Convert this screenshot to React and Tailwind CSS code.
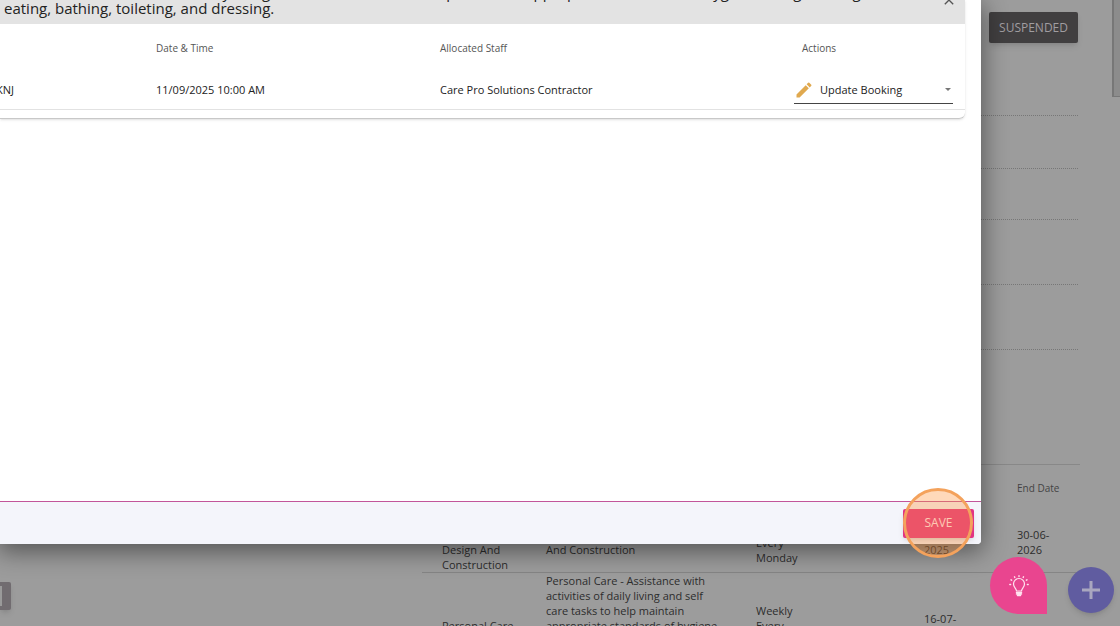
import { useState } from 'react';
import { MdClose, MdEdit } from 'react-icons/md';

const services = [
  {
    name: 'Home Modification Design And Construction',
    description: 'Home Modifications - Design And\u00a0Construction',
    frequency: 'Weekly Every Monday',
    start: '16-07-2025',
    end: '30-06-2026',
  },
  {
    name: 'Personal Care',
    description:
      'Personal Care - Assistance with activities of daily living and self care tasks to help maintain appropriate standards of hygiene and grooming including eating, bathing, toileting, and dressing at home and in the community.',
    frequency: 'Weekly Every Monday',
    start: '16-07-2025',
    end: '',
  },
];

function DottedRow({ className }) {
  return <div className={`border-b border-dotted border-[#777] ${className}`}></div>;
}

function BackgroundPage() {
  return (
    <div className="flex h-full flex-col overflow-hidden text-[#2c2c2c]">
      <div className="flex-1 pr-[42px]">
        <div className="flex h-[52px] items-start justify-end pt-3">
          <button
            type="button"
            className="h-[31px] rounded-xs bg-[#413f40] px-2.5 text-xs text-[#a09da0] shadow-md"
          >
            SUSPENDED
          </button>
        </div>
        <DottedRow className="h-16" />
        <DottedRow className="h-[53px]" />
        <DottedRow className="h-[51px]" />
        <DottedRow className="h-[65px]" />
        <DottedRow className="h-[65px]" />
      </div>

      <div className="flex h-[162px] shrink-0 justify-between pr-10">
        <div className="pt-[118px]">
          <button
            type="button"
            aria-label="Collapse panel"
            className="flex h-7 w-[11px] items-center rounded-r-xs bg-[#716c70] shadow-md"
          >
            <span className="h-5 w-0.5 bg-[#9a9a9a]"></span>
          </button>
        </div>
        <div className="w-[658px] overflow-hidden border-t border-[#888]">
          <table className="w-full table-fixed text-left text-[11px] leading-[15px]">
            <thead>
              <tr className="h-[47px] text-[10px] text-[#444]">
                <th className="w-[113px] pl-5 font-medium">Service</th>
                <th className="w-[210px] pl-[11px] font-medium">Description</th>
                <th className="w-[168px] pl-[11px] font-medium">Frequency</th>
                <th className="w-[92px] pl-[11px] font-medium">Start Date</th>
                <th className="pl-3 font-medium">End Date</th>
              </tr>
            </thead>
            <tbody>
              {services.map((service) => (
                <tr key={service.name} className="border-b border-[#858585]">
                  <td className="pl-5 pr-1">{service.name}</td>
                  <td className="pl-[11px] pr-6">{service.description}</td>
                  <td className="pl-[11px] pr-24">{service.frequency}</td>
                  <td className="pl-[11px] pr-8">{service.start}</td>
                  <td className="pl-3 pr-5">{service.end}</td>
                </tr>
              ))}
            </tbody>
          </table>
        </div>
      </div>
    </div>
  );
}

function BookingDialog() {
  const [action, setAction] = useState('update');

  return (
    <div
      role="dialog"
      aria-label="Update booking"
      className="absolute top-0 bottom-[82px] left-0 right-[139px] flex flex-col overflow-hidden rounded-br bg-white shadow-[0_6px_24px_2px_rgba(0,0,0,0.45)]"
    >
      <div className="flex-1">
        <div className="mr-4 overflow-hidden rounded-br-md border-b border-[#c8c8c8] pb-2 shadow-sm">
          <div className="flex h-6 items-end justify-between bg-[#e3e3e3] pr-2 pb-2 pl-1 text-[15px] leading-4 text-[#222]">
            <h2 className="whitespace-nowrap">
              <span className="block">
                Assistance with activities of daily living and self care tasks to help maintain appropriate standards of hygiene and grooming
              </span>
              eating, bathing, toileting, and dressing.
            </h2>
            <button type="button" aria-label="Close" className="mb-2 text-[#555]">
              <MdClose className="size-4" />
            </button>
          </div>
          <table className="w-full table-fixed border-b border-[#e2e2e2] text-left text-[11px]">
            <thead>
              <tr className="h-12 text-[10px] text-[#555]">
                <th className="w-[156px] font-medium"></th>
                <th className="font-medium">Date &amp; Time</th>
                <th className="w-[354px] font-medium">Allocated Staff</th>
                <th className="w-[171px] pl-2 font-medium">Actions</th>
              </tr>
            </thead>
            <tbody>
              <tr className="h-[37px] text-[#222]">
                <td>
                  <span className="flex w-3.5 justify-end overflow-hidden">KNJ</span>
                </td>
                <td>11/09/2025 10:00 AM</td>
                <td>Care Pro Solutions Contractor</td>
                <td className="pr-3">
                  <label className="flex h-7 items-center border-b border-[#444]">
                    <MdEdit className="size-5 text-[#e0a94f]" />
                    <select
                      aria-label="Booking action"
                      value={action}
                      onChange={(e) => setAction(e.target.value)}
                      className="ml-1.5 flex-1 appearance-none bg-transparent outline-none"
                    >
                      <option value="update">Update Booking</option>
                      <option value="cancel">Cancel Booking</option>
                    </select>
                    <span className="mr-0.5 border-x-3 border-t-3 border-x-transparent border-t-[#777]"></span>
                  </label>
                </td>
              </tr>
            </tbody>
          </table>
        </div>
      </div>
      <div className="h-px bg-[#c2559a]"></div>
      <div className="flex h-[42px] items-center justify-end bg-[#f4f5fb] pr-[7px]">
        <button
          type="button"
          className="h-[29px] w-[71px] rounded-xs bg-[#e23382] text-xs text-pink-100 shadow-md"
        >
          SAVE
        </button>
      </div>
    </div>
  );
}

export default function App() {
  return (
    <div className="relative h-screen overflow-hidden bg-[#9c9c9c] font-['Open_Sans',sans-serif]">
      <BackgroundPage />
      <div className="absolute top-0 right-0 h-[97px] w-2 border-b border-l-2 border-[#777] bg-[#8c8c8c]"></div>
      <BookingDialog />
      <div className="pointer-events-none absolute right-[147px] bottom-[68px] size-[70px] rounded-full border-3 border-[#f4a25c] bg-[#ff9138]/35"></div>
      <button
        type="button"
        aria-label="Tips"
        className="absolute right-[73px] bottom-3 flex size-[57px] items-center justify-center rounded-full rounded-br-md bg-[#e9458f]"
      >
        <svg viewBox="0 0 20 22" className="h-[22px] w-5" fill="none" stroke="#ffe3ef" strokeLinecap="round">
          <path d="M7.500 16c0-2.500-3-3.500-3-7a5.500 5.500 0 0 1 11 0c0 3.500-3 4.500-3 7z" strokeWidth="1.200" />
          <path d="M7.500 17.500h5M7.500 19h5M8.500 20.500h3" strokeWidth="1.500" />
          <path
            d="M10 .8v.8M5.500 1.800l.3.600M14.500 1.800l-.3.600M2 4.800l.6.400M18 4.800l-.6.400M.8 9.500h.8M18.400 9.500h.8"
            strokeWidth="1.400"
          />
        </svg>
      </button>
      <button
        type="button"
        aria-label="Add"
        className="absolute right-1.5 bottom-[13px] flex size-[46px] items-center justify-center rounded-full bg-[#605ca0] shadow-md"
      >
        <svg viewBox="0 0 20 20" className="size-5" stroke="#a9a7bf" strokeWidth="3">
          <path d="M10 1v18M1 10h18" />
        </svg>
      </button>
    </div>
  );
}
